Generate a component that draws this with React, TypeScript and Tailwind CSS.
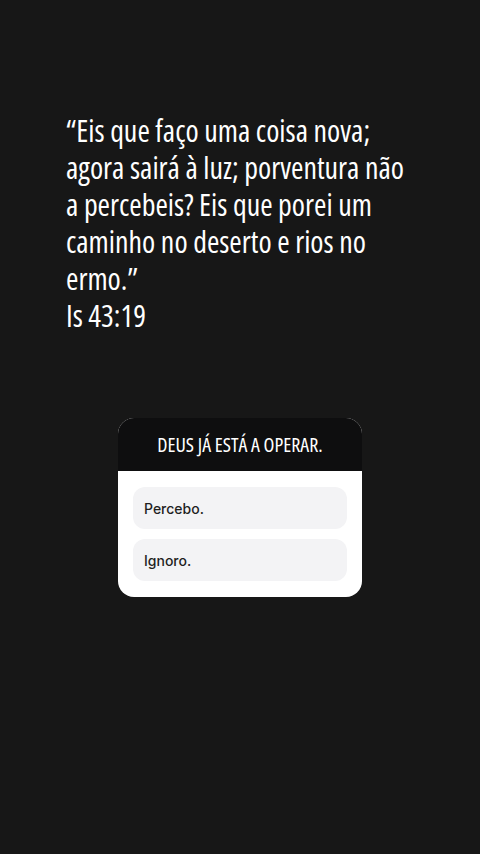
export default function App() {
  return (
    <div className="w-[480px] h-[854px] bg-[#171717] flex flex-col overflow-hidden">
      <div className="pt-[112px] pl-[66px] text-white text-[30px] leading-[37px] font-['Open_Sans',sans-serif] [font-stretch:75%] whitespace-nowrap">
        <p>
          “Eis que faço uma coisa nova;
          <br />
          agora sairá à luz; porventura não
          <br />
          a percebeis? Eis que porei um
          <br />
          caminho no deserto e rios no
          <br />
          ermo.”
        </p>
        <p>Is 43:19</p>
      </div>

      <div className="mt-[84px] ml-[118px] w-[244px] rounded-[16px] overflow-hidden bg-white">
        <div className="h-[53px] bg-[#0e0e0f] text-white flex items-center justify-center text-[20px] font-['Open_Sans',sans-serif] [font-stretch:75%]">
          DEUS JÁ ESTÁ A OPERAR.
        </div>
        <div className="px-[15px] pt-[16px] pb-[16px] flex flex-col gap-[10px] font-['Inter',sans-serif]">
          <div className="h-[42px] rounded-[12px] bg-[#f3f3f5] flex items-center px-[11px] text-[14px] font-medium text-[#1f1f1f]">
            Percebo.
          </div>
          <div className="h-[42px] rounded-[12px] bg-[#f3f3f5] flex items-center px-[11px] text-[14px] font-medium text-[#1f1f1f]">
            Ignoro.
          </div>
        </div>
      </div>
    </div>
  );
}
